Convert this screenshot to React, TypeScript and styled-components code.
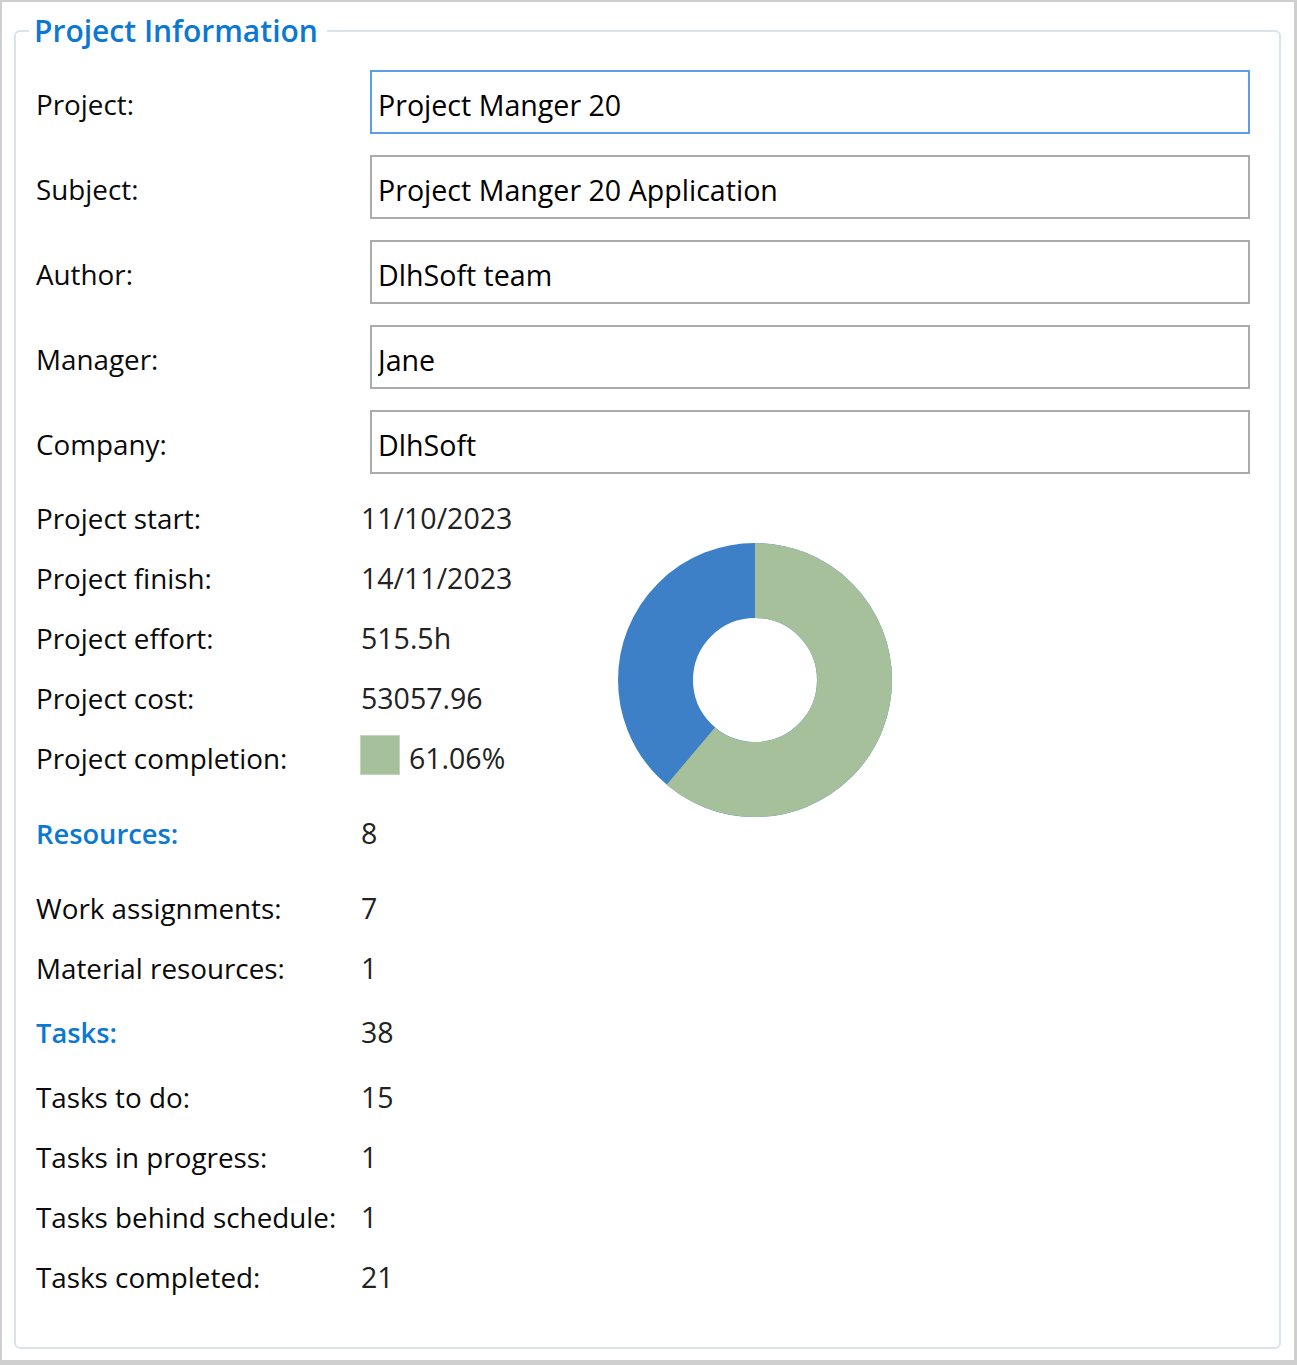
import React from "react";
import styled, { createGlobalStyle } from "styled-components";

const Global = createGlobalStyle`
  html, body { margin: 0; padding: 0; background: #ffffff; }
  body { font-family: "Open Sans", "Noto Sans", sans-serif; }
`;

const Frame = styled.div`
  box-sizing: border-box;
  width: 1297px;
  height: 1365px;
  border-style: solid;
  border-color: #cfcfcf;
  border-width: 2px 3px 5px 2px;
  background: #ffffff;
  padding: 9px 13px 11px 12px;
  display: flex;
  flex-direction: column;
`;

const Group = styled.fieldset`
  flex: 1;
  margin: 0;
  padding: 0;
  min-width: 0;
  border: 2px solid #d9e3ea;
  border-radius: 6px;
`;

const Legend = styled.legend`
  margin-left: 13px;
  padding: 0 9px 0 5px;
  font-family: "Open Sans", "Noto Sans", sans-serif;
  font-weight: 600;
  font-size: 30px;
  line-height: 40px;
  color: #0b78d2;
`;

const Body = styled.div`
  padding: 19px 0 0 20px;
  display: flex;
  flex-direction: column;
`;

const FieldRow = styled.div`
  display: grid;
  grid-template-columns: 334px 880px;
  align-items: center;
  height: 64px;
  & + & {
    margin-top: 21px;
  }
`;

const Label = styled.span<{ $accent?: boolean }>`
  font-size: ${(p) => (p.$accent ? "27.3px" : "27.8px")};
  color: ${(p) => (p.$accent ? "#0b78d2" : "#0a0a0a")};
  font-weight: ${(p) => (p.$accent ? 600 : 400)};
  white-space: nowrap;
`;

const FieldLabel = styled(Label)`
  padding-top: 4px;
`;

const TextBox = styled.input<{ $focused?: boolean }>`
  box-sizing: border-box;
  width: 880px;
  height: 64px;
  margin: 0;
  padding: 4px 6px 0;
  border: 2px solid ${(p) => (p.$focused ? "#5a9fe6" : "#ababab")};
  border-radius: 0;
  outline: none;
  background: #ffffff;
  font-family: "Open Sans", "Noto Sans", sans-serif;
  font-size: 28.6px;
  color: #000000;
`;

const StatsArea = styled.div`
  display: flex;
  align-items: flex-start;
  margin-top: 14px;
`;

const StatsList = styled.div`
  width: 582px;
  display: flex;
  flex-direction: column;
`;

const StatRow = styled.div<{ $space?: number }>`
  display: grid;
  grid-template-columns: 325px auto;
  align-items: center;
  height: 60px;
  margin-top: ${(p) => p.$space ?? 0}px;
`;

const Value = styled.span`
  font-size: 28.5px;
  color: #222222;
  display: flex;
  align-items: center;
  gap: 9px;
`;

const Swatch = styled.span`
  box-sizing: border-box;
  width: 40px;
  height: 40px;
  background: #a5c09a;
  border: 1px solid #c3d4bb;
  margin-left: -1px;
  margin-top: -6px;
`;

const Chart = styled.svg`
  margin-top: 55px;
  flex: none;
`;

const fields = [
  { label: "Project:", value: "Project Manger 20", focused: true },
  { label: "Subject:", value: "Project Manger 20 Application" },
  { label: "Author:", value: "DlhSoft team" },
  { label: "Manager:", value: "Jane" },
  { label: "Company:", value: "DlhSoft" },
];

type Stat = { label: string; value: string; accent?: boolean; space?: number; swatch?: boolean };

const stats: Stat[] = [
  { label: "Project start:", value: "11/10/2023" },
  { label: "Project finish:", value: "14/11/2023" },
  { label: "Project effort:", value: "515.5h" },
  { label: "Project cost:", value: "53057.96" },
  { label: "Project completion:", value: "61.06%", swatch: true },
  { label: "Resources:", value: "8", accent: true, space: 15 },
  { label: "Work assignments:", value: "7", space: 15 },
  { label: "Material resources:", value: "1" },
  { label: "Tasks:", value: "38", accent: true, space: 4 },
  { label: "Tasks to do:", value: "15", space: 5 },
  { label: "Tasks in progress:", value: "1" },
  { label: "Tasks behind schedule:", value: "1" },
  { label: "Tasks completed:", value: "21" },
];

const Donut: React.FC<{ completion: number }> = ({ completion }) => {
  const r = 99.5;
  const c = 2 * Math.PI * r;
  const green = (completion / 100) * c;
  return (
    <Chart width={274} height={274} viewBox="0 0 274 274">
      <g transform="rotate(-90 137 137)">
        <circle cx={137} cy={137} r={r} fill="none" stroke="#3d80c8" strokeWidth={75} />
        <circle
          cx={137}
          cy={137}
          r={r}
          fill="none"
          stroke="#a5c09a"
          strokeWidth={75}
          strokeDasharray={`${green} ${c}`}
        />
      </g>
    </Chart>
  );
};

export default function App() {
  return (
    <>
      <Global />
      <Frame>
        <Group>
          <Legend>Project Information</Legend>
          <Body>
            {fields.map((f) => (
              <FieldRow key={f.label}>
                <FieldLabel>{f.label}</FieldLabel>
                <TextBox $focused={f.focused} defaultValue={f.value} readOnly />
              </FieldRow>
            ))}
            <StatsArea>
              <StatsList>
                {stats.map((s) => (
                  <StatRow key={s.label} $space={s.space}>
                    <Label $accent={s.accent}>{s.label}</Label>
                    <Value>
                      {s.swatch && <Swatch />}
                      {s.value}
                    </Value>
                  </StatRow>
                ))}
              </StatsList>
              <Donut completion={61.06} />
            </StatsArea>
          </Body>
        </Group>
      </Frame>
    </>
  );
}
